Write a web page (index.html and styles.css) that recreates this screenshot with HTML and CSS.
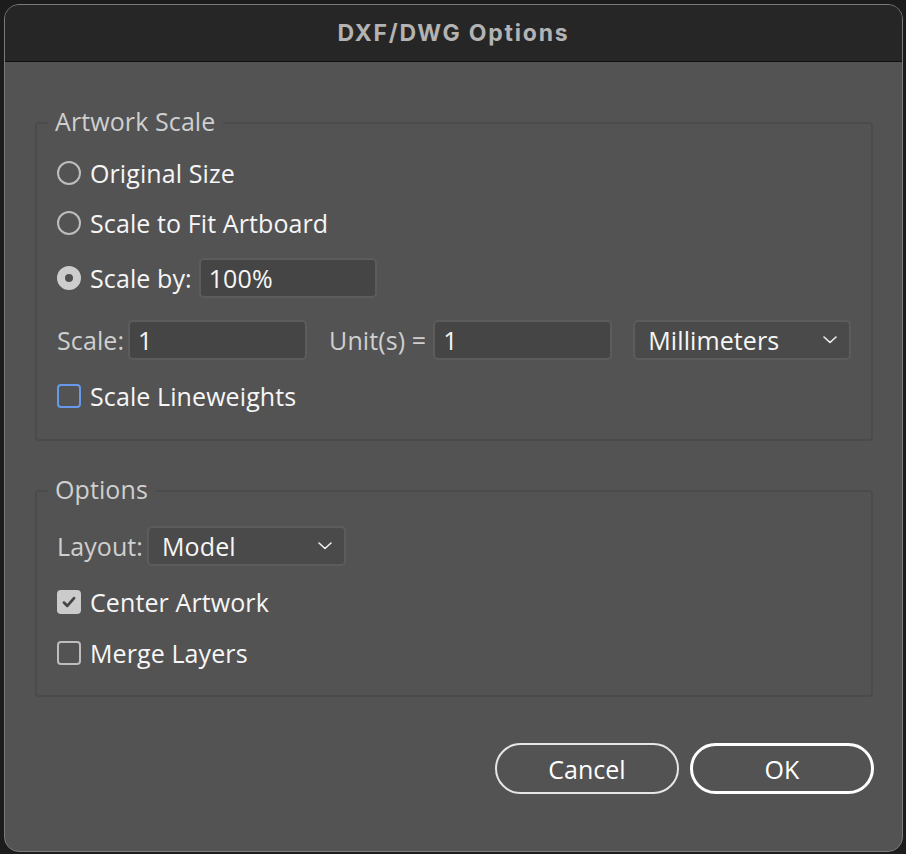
FILE: index.html
```html
<!DOCTYPE html>
<html>
<head>
<meta charset="utf-8">
<title>DXF/DWG Options</title>
<link rel="stylesheet" href="styles.css">
</head>
<body>
<div class="window">
  <div class="titlebar">DXF/DWG Options</div>
  <div class="content">
    <section class="group group-scale">
      <div class="legend">Artwork Scale</div>
      <div class="row r1"><span class="radio"></span><span class="text">Original Size</span></div>
      <div class="row r2"><span class="radio"></span><span class="text">Scale to Fit Artboard</span></div>
      <div class="row r3"><span class="radio checked"></span><span class="text">Scale by:</span><span class="field w-pct">100%</span></div>
      <div class="row r4">
        <span class="label">Scale:</span><span class="field w-num first">1</span>
        <span class="label unit">Unit(s) =</span><span class="field w-num second">1</span>
        <span class="field select w-unit">Millimeters<svg class="chev" viewBox="0 0 14 8"><path d="M1 1l6 5.5L13 1"/></svg></span>
      </div>
      <div class="row r5"><span class="check focus"></span><span class="text">Scale Lineweights</span></div>
    </section>
    <section class="group group-opts">
      <div class="legend">Options</div>
      <div class="row o1"><span class="label">Layout:</span><span class="field select w-layout">Model<svg class="chev" viewBox="0 0 14 8"><path d="M1 1l6 5.5L13 1"/></svg></span></div>
      <div class="row o2"><span class="check on"><svg viewBox="0 0 16 16"><path d="M3.5 8.5l3 3L12.5 4.5"/></svg></span><span class="text">Center Artwork</span></div>
      <div class="row o3"><span class="check"></span><span class="text">Merge Layers</span></div>
    </section>
    <div class="buttons">
      <button class="btn">Cancel</button>
      <button class="btn primary">OK</button>
    </div>
  </div>
</div>
</body>
</html>
```

FILE: styles.css
```css
html, body {
  margin: 0;
  padding: 0;
  background: #1c1c1c;
  width: 906px;
  height: 854px;
  overflow: hidden;
}
body {
  font-family: "Open Sans", "Noto Sans", sans-serif;
  color: #f4f4f4;
  padding: 4px 3px 2px 4px;
  box-sizing: border-box;
}
.window {
  height: 848px;
  box-sizing: border-box;
  border: 1px solid #7a7a7a;
  border-radius: 15px;
  background: #535353;
  overflow: hidden;
  display: flex;
  flex-direction: column;
}
.titlebar {
  height: 55px;
  flex: none;
  background: #262626;
  border-bottom: 1px solid #101010;
  display: flex;
  align-items: center;
  justify-content: center;
  font-family: "Inter", "Liberation Sans", sans-serif;
  font-weight: 700;
  font-size: 23px;
  color: #b3b3b3;
  letter-spacing: 1.8px;
  padding-bottom: 1px;
}
.content {
  padding: 0 29px 0 30px;
  display: flex;
  flex-direction: column;
}
.group {
  position: relative;
  border: 2px solid #4b4b4b;
  border-radius: 4px;
  padding: 0 0 0 20px;
}
.group-scale {
  margin-top: 60px;
  height: 319px;
  box-sizing: border-box;
}
.group-opts {
  margin-top: 49px;
  height: 207px;
  box-sizing: border-box;
}
.legend {
  position: absolute;
  top: -20px;
  left: 11px;
  padding: 0 8px 0 7px;
  background: #535353;
  font-size: 25px;
  letter-spacing: 0.1px;
  line-height: 34px;
  color: #cfcfcf;
}
.row {
  display: flex;
  align-items: center;
  height: 40px;
  font-size: 25px;
  letter-spacing: 0.1px;
}
.r1 { margin-top: 29px; }
.r2 { margin-top: 10px; }
.r3 { margin-top: 15px; }
.r4 { margin-top: 22px; }
.r5 { margin-top: 16px; }
.o1 { margin-top: 34px; }
.o2 { margin-top: 16px; }
.o3 { margin-top: 11px; }
.text {
  margin-left: 9px;
  color: #f6f6f6;
}
.label {
  color: #cfcfcf;
}
.radio {
  width: 24px;
  height: 24px;
  box-sizing: border-box;
  border: 2px solid #bdbdbd;
  border-radius: 50%;
  flex: none;
}
.radio.checked {
  border: 8px solid #cdcdcd;
  background: #4f4f4f;
}
.check {
  width: 24px;
  height: 24px;
  box-sizing: border-box;
  border: 2px solid #bdbdbd;
  border-radius: 4px;
  flex: none;
  display: flex;
  align-items: center;
  justify-content: center;
}
.check.focus {
  border-color: #6699ea;
}
.check.on {
  background: #cbcbcb;
  border-color: #cbcbcb;
}
.check svg {
  width: 18px;
  height: 18px;
  fill: none;
  stroke: #454545;
  stroke-width: 2.4;
  stroke-linecap: round;
  stroke-linejoin: round;
}
.field {
  height: 40px;
  box-sizing: border-box;
  background: #454545;
  border: 2px solid #5c5c5c;
  border-radius: 5px;
  display: flex;
  align-items: center;
  padding: 0 8px;
  color: #f6f6f6;
  font-size: 25px;
  flex: none;
}
.w-pct { width: 178px; margin-left: 7px; }
.w-num { width: 179px; }
.w-num.first { margin-left: 4px; }
.w-num.second { margin-left: 7px; }
.label.unit { margin-left: 22px; }
.w-unit { width: 218px; margin-left: 21px; padding-left: 13px; background: #4a4a4a; }
.w-layout { width: 199px; padding-left: 13px; margin-left: 4px; background: #4a4a4a; }
.select { justify-content: space-between; padding-right: 12px; }
.chev {
  width: 14px;
  height: 8px;
  fill: none;
  stroke: #f0f0f0;
  stroke-width: 1.6;
  stroke-linecap: round;
  stroke-linejoin: round;
}
.buttons {
  display: flex;
  justify-content: flex-end;
  gap: 11px;
  margin-top: 46px;
  margin-right: -1px;
}
.btn {
  width: 184px;
  height: 51px;
  box-sizing: border-box;
  border: 2px solid #e6e6e6;
  border-radius: 26px;
  background: transparent;
  color: #ffffff;
  font-family: "Open Sans", "Noto Sans", sans-serif;
  font-size: 25px;
  padding: 0;
}
.btn.primary {
  border: 3px solid #ffffff;
}
```
